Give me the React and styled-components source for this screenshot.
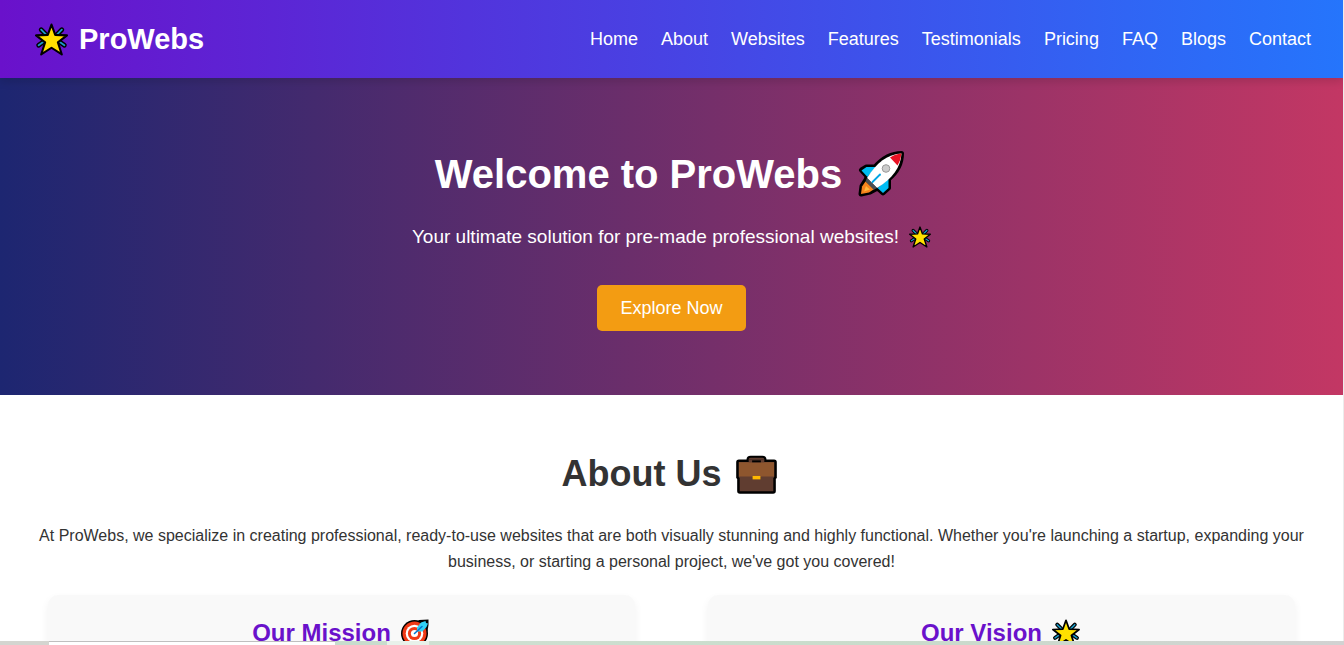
import React from "react";
import styled, { createGlobalStyle } from "styled-components";

const GlobalStyle = createGlobalStyle`
  * { box-sizing: border-box; margin: 0; padding: 0; }
  html { overflow: hidden; background: #fff; }
  body {
    font-family: "Liberation Sans", Arial, sans-serif;
    font-size: 16px;
    line-height: 26px;
    color: #333;
    background: #fff;
    border-right: 1px solid #ececec;
    height: 100vh;
    overflow: hidden;
  }
`;

const Header = styled.header`
  position: relative;
  z-index: 1;
  display: flex;
  justify-content: space-between;
  align-items: center;
  padding: 16px 32px;
  background: linear-gradient(to right, #6a11cb, #2575fc);
  box-shadow: 0 4px 8px rgba(0, 0, 0, 0.12);
`;

const Logo = styled.div`
  display: flex;
  align-items: center;
  gap: 11px;
  padding-left: 3px;
  font-size: 29px;
  line-height: 46px;
  font-weight: bold;
  color: #fff;
`;

const NavList = styled.ul`
  display: flex;
  gap: 23px;
  list-style: none;
`;

const NavLink = styled.a`
  font-size: 18px;
  color: #fff;
  text-decoration: none;
`;

const Hero = styled.section`
  display: flex;
  flex-direction: column;
  align-items: center;
  padding: 64px 32px;
  text-align: center;
  color: #fff;
  background: linear-gradient(to right, #1d2671, #c33764);
`;

const HeroTitle = styled.h1`
  display: flex;
  align-items: center;
  gap: 16px;
  margin-bottom: 16px;
  padding-right: 4px;
  font-size: 40px;
  line-height: 64px;
`;

const HeroText = styled.p`
  display: flex;
  align-items: center;
  gap: 10px;
  margin-bottom: 34px;
  font-size: 19px;
  line-height: 29px;
`;

const ExploreButton = styled.button`
  padding: 12px 23px;
  border: none;
  border-radius: 5px;
  background: #f39c12;
  color: #fff;
  font-family: inherit;
  font-size: 18px;
  line-height: 22px;
`;

const About = styled.section`
  padding: 48px 32px;
  text-align: center;
`;

const SectionTitle = styled.h2`
  display: flex;
  justify-content: center;
  align-items: center;
  gap: 15px;
  margin-bottom: 18px;
  padding-right: 4px;
  font-size: 36px;
  line-height: 62px;
`;

const Cards = styled.div`
  display: grid;
  grid-template-columns: 1fr 1fr;
  gap: 73px;
  margin-top: 20px;
  padding: 0 16px;
`;

const Card = styled.article`
  padding: 20px;
  border-radius: 10px;
  background: #f9f9f9;
  box-shadow: 0 4px 8px rgba(0, 0, 0, 0.06);
`;

const CardTitle = styled.h3`
  display: flex;
  justify-content: center;
  align-items: center;
  gap: 10px;
  margin-bottom: 8px;
  padding-right: 2px;
  font-size: 24px;
  line-height: 36px;
  color: #6a11cb;
`;

const Icon = styled.svg`
  flex: none;
  display: block;
  width: ${(p) => p.$size}px;
  height: ${(p) => p.$size}px;
`;

const BottomEdge = styled.div`
  position: fixed;
  left: 0;
  right: 0;
  bottom: 0;
  z-index: 2;
  display: flex;
  height: 4px;
  background: linear-gradient(to right, #cfe0d2 30%, #c9dccb 65%, #d2d2d2);
`;

const EdgePart = styled.span`
  width: ${(p) => p.$width}px;
  background: ${(p) => p.$color};
  border-top: ${(p) => (p.$line ? "1px solid #bfbfbf" : "none")};
`;

const rays = "M6 6.500L10.500 11M26 6.500L21.500 11M3.500 21.500L8 18.500M28.500 21.500L24 18.500";

const Star = ({ size }) => (
  <Icon $size={size} viewBox="0 0 32 32" aria-hidden="true">
    <g strokeLinecap="round" fill="none">
      <path d={rays} stroke="#000" strokeWidth="4.600" />
      <path d={rays} stroke="#199bc8" strokeWidth="1.800" />
    </g>
    <path d="M16 1.500L19.600 11.500L31 12L22.200 18.800L26 30.500L16 24L6 30.500L9.800 18.800L1 12L12.400 11.500Z" fill="#ffe100" stroke="#000" strokeWidth="2" strokeLinejoin="round" />
  </Icon>
);

const Rocket = ({ size }) => (
  <Icon $size={size} viewBox="0 0 46 46" aria-hidden="true">
    <path d="M3 43L4 35L8.500 28L9 25L3.500 19L8.500 16H17C25 7 34 2.500 43.500 2.500C43.500 12 39 21 30.500 28V37L25 42L19.500 37L12 41Z" fill="#000" stroke="#000" strokeWidth="5" strokeLinejoin="round" />
    <path d="M3.500 19.500L8.500 16H17.500L9.500 26ZM30.500 28V37L25 42L19.500 37Z" fill="#00bcf2" />
    <path d="M9 27C18 12 30 3 43.500 2.500C43 16 34 28 19 37Z" fill="#fff" />
    <path d="M32 6.500Q37 3 43.500 2.500Q43 9 39.500 14.500Z" fill="#e81224" />
    <path d="M9 27L19 37L15.500 39L7.500 30.500Z" fill="#4a4e54" />
    <path d="M7.500 30.500L15.500 38.500L11 41.500L3 43L4 35.500Z" fill="#f7841d" />
    <path d="M8 35L12 38.500L6 40.500Z" fill="#ffb83d" />
    <circle cx="28" cy="17.500" r="3.800" fill="#ccc" stroke="#999" strokeWidth="1" />
    <path d="M14.500 31L22 23.500" stroke="#00a4e4" strokeWidth="1.800" strokeLinecap="round" />
  </Icon>
);

const Briefcase = ({ size }) => (
  <Icon $size={size} viewBox="0 0 42 42" aria-hidden="true">
    <path d="M14 9V6Q14 5 15 5H27Q28 5 28 6V9" fill="none" stroke="#000" strokeWidth="6.500" strokeLinejoin="round" />
    <path d="M14 9V6Q14 5 15 5H27Q28 5 28 6V9" fill="none" stroke="#603d30" strokeWidth="2.200" />
    <path d="M3 7H39Q40.500 7 40.500 8.500V24L39.500 25V38Q39.500 39.500 38 39.500H4Q2.500 39.500 2.500 38V25L1.500 24V8.500Q1.500 7 3 7Z" fill="#603d30" stroke="#000" strokeWidth="2.600" />
    <path d="M3 8.500H39V23H3Z" fill="#8e562e" />
    <path d="M13 8.500V5.500H29V8.500Z" fill="#603d30" />
    <path d="M16.500 8.500V6.500H25.500V8.500Z" fill="#000" />
    <path d="M17 22.500H25V26H17Z" fill="#ffb900" />
  </Icon>
);

const Target = ({ size }) => (
  <Icon $size={size} viewBox="0 0 28 28" aria-hidden="true">
    <circle cx="13.500" cy="14.500" r="13.500" fill="#000" />
    <path d="M15 4L18 1L27.500 0.500V6L26.500 12L21 12Z" fill="#000" />
    <circle cx="13.500" cy="14.500" r="12" fill="#f03a17" />
    <circle cx="13.500" cy="14.500" r="8.800" fill="#fff" />
    <circle cx="13.500" cy="14.500" r="6.600" fill="#f03a17" />
    <circle cx="13.500" cy="14.500" r="3.600" fill="#fff" />
    <path d="M16 8.500L20 3.500L24.500 2L25 4L27 4.500L25.500 8L21.500 12.500L16 12.500Z" fill="#31d2f7" />
    <path d="M13.500 14.500L21 7.500" stroke="#0078d4" strokeWidth="1.600" strokeLinecap="round" />
  </Icon>
);

const links = ["Home", "About", "Websites", "Features", "Testimonials", "Pricing", "FAQ", "Blogs", "Contact"];

export default function App() {
  return (
    <>
      <GlobalStyle />
      <Header>
        <Logo><Star size={33} />ProWebs</Logo>
        <nav>
          <NavList>
            {links.map((label) => (
              <li key={label}><NavLink href={`#${label.toLowerCase()}`}>{label}</NavLink></li>
            ))}
          </NavList>
        </nav>
      </Header>
      <main>
        <Hero>
          <HeroTitle>Welcome to ProWebs <Rocket size={46} /></HeroTitle>
          <HeroText>Your ultimate solution for pre-made professional websites! <Star size={22} /></HeroText>
          <ExploreButton type="button">Explore Now</ExploreButton>
        </Hero>
        <About>
          <SectionTitle>About Us <Briefcase size={41} /></SectionTitle>
          <p>
            At ProWebs, we specialize in creating professional, ready-to-use websites that are both visually stunning
            and highly functional. Whether you're launching a startup, expanding your business, or starting a personal
            project, we've got you covered!
          </p>
          <Cards>
            <Card><CardTitle>Our Mission <Target size={28} /></CardTitle></Card>
            <Card><CardTitle>Our Vision <Star size={28} /></CardTitle></Card>
          </Cards>
        </About>
      </main>
      <BottomEdge>
        <EdgePart $width={49} $color="#d4d5d0" />
        <EdgePart $width={286} $color="#fff" $line />
        <EdgePart $width={52} $color="#c8dccd" />
        <EdgePart $width={42} $color="#e8f1ea" />
      </BottomEdge>
    </>
  );
}
